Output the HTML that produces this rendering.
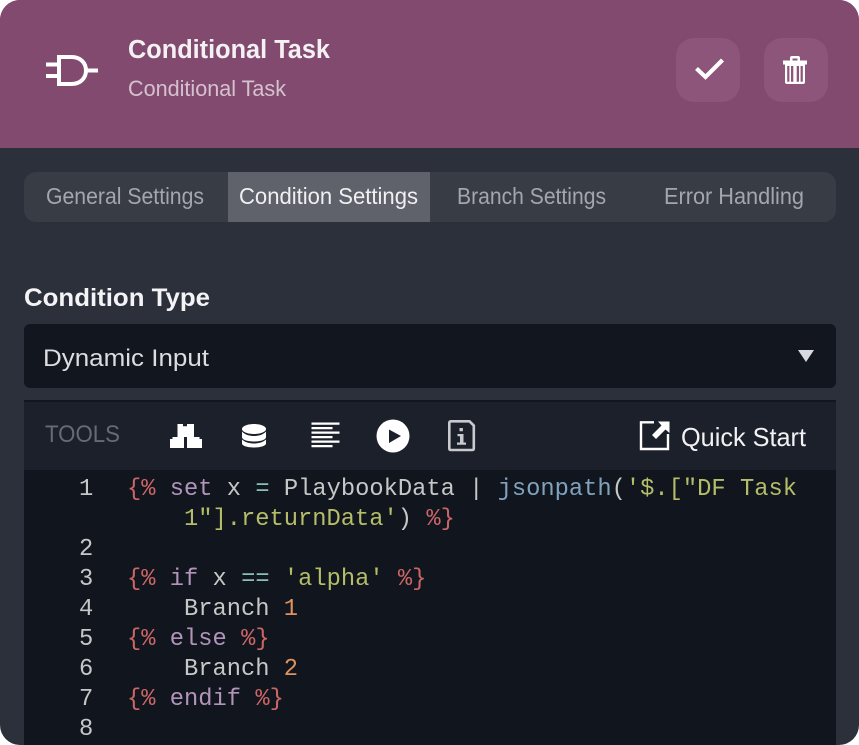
<!DOCTYPE html>
<html lang="en"><head><meta charset="utf-8"><title>Conditional Task</title>
<style>
html,body{margin:0;padding:0;background:#fff}
#p{position:relative;width:859px;height:745px;overflow:hidden;background:#2c303a;border-radius:20px}
#p div{position:absolute}
svg{position:absolute;left:0;top:0}
.s{font-family:"Liberation Sans",sans-serif}
.c{font-family:"Liberation Mono",monospace;font-size:23.75px;fill:#c5c8c6;white-space:pre;stroke:currentColor;stroke-width:0}
.r{fill:#cc6666}.k{fill:#b294bb}.o{fill:#8abeb7}.g{fill:#b5bd68}.n{fill:#de935f}.b{fill:#81a2be}
</style></head><body>
<div id="p">
<div style="left:0;top:0;width:859px;height:148px;background:#834a70"></div>
<div style="left:676px;top:38px;width:64px;height:64px;border-radius:18px;background:#8c5579"></div>
<div style="left:764px;top:38px;width:64px;height:64px;border-radius:18px;background:#8c5579"></div>
<div style="left:24px;top:172px;width:812px;height:50px;border-radius:12px;background:#383c45"></div>
<div style="left:228px;top:172px;width:202px;height:50px;background:#5f626b"></div>
<div style="left:24px;top:324px;width:812px;height:64px;border-radius:6px;background:#12161f"></div>
<div style="left:24px;top:400px;width:812px;height:70px;background:#1c202a;border-top:2px solid #12161f;box-sizing:border-box"></div>
<div style="left:24px;top:470px;width:812px;height:275px;background:#11151e"></div>
<svg width="859" height="745" viewBox="0 0 859 745" xmlns="http://www.w3.org/2000/svg">
<!-- header icons -->
<g fill="none" stroke="#fff" stroke-width="4">
<path d="M59 57H71.500C80.500 57 86 63 86 70.500C86 78 80.500 84 71.500 84H59Z"/>
<path d="M46 64.500H59M46 76H59M86 70.500H98"/>
</g>
<path d="M696.500 68.500L705.500 77L722.500 60" fill="none" stroke="#fff" stroke-width="4.200"/>
<g fill="#fff">
<path d="M790 60.500V58Q790 56 792 56H798Q800 56 800 58V60.500H807V64.500H783V60.500ZM792.500 60.500H797.500V58.500H792.500Z" fill-rule="evenodd"/>
<path d="M785 64H805V82Q805 84 803 84H787Q785 84 785 82ZM787.200 66V81.800H789.400V66ZM791 66V81.800H793.300V66ZM796.700 66V81.800H799V66ZM800.600 66V81.800H802.800V66Z" fill-rule="evenodd"/>
</g>
<!-- text -->
<g class="s">
<text x="128" y="58" font-size="25.500" font-weight="700" fill="#f4f1f3" textLength="202" lengthAdjust="spacingAndGlyphs">Conditional Task</text>
<text x="128" y="96" font-size="22.500" fill="#d4c2cf" textLength="158" lengthAdjust="spacingAndGlyphs">Conditional Task</text>
<text x="46" y="204" font-size="23" fill="#a3a6ae" textLength="158" lengthAdjust="spacingAndGlyphs">General Settings</text>
<text x="239" y="204" font-size="23" fill="#f0f0f2" textLength="179" lengthAdjust="spacingAndGlyphs">Condition Settings</text>
<text x="457" y="204" font-size="23" fill="#a3a6ae" textLength="149" lengthAdjust="spacingAndGlyphs">Branch Settings</text>
<text x="664" y="204" font-size="23" fill="#a3a6ae" textLength="140" lengthAdjust="spacingAndGlyphs">Error Handling</text>
<text x="24" y="306" font-size="25" font-weight="700" fill="#f4f4f6" textLength="186" lengthAdjust="spacingAndGlyphs">Condition Type</text>
<text x="43" y="366" font-size="24.500" fill="#dcdde1" textLength="166" lengthAdjust="spacingAndGlyphs">Dynamic Input</text>
<text x="45" y="442" font-size="24" fill="#666a74" textLength="75" lengthAdjust="spacingAndGlyphs">TOOLS</text>
<text x="681" y="446" font-size="26" fill="#f2f2f4" textLength="125" lengthAdjust="spacingAndGlyphs">Quick Start</text>
</g>
<path d="M798 350H814L806 362Z" fill="#d9dae0"/>
<!-- tool icons -->
<g fill="#fff">
<path d="M177.500 437V424H183V426.200H187V424H194V437Z"/>
<path d="M170 448V439H172.500V437H184V448Z"/>
<path d="M187 448V437H199.500V439H202V448Z"/>
<path d="M242 429C242 426 248 424 254 424C260 424 266 426 266 429C266 432 260 434 254 434C248 434 242 432 242 429Z"/>
<path d="M242 431.500C245 435 250 436 254 436C258 436 263 435 266 431.500V437C266 440 260 441.500 254 441.500C248 441.500 242 440 242 437Z"/>
<path d="M242 439.500C245 442.500 250 443.500 254 443.500C258 443.500 263 442.500 266 439.500V443.500C266 446 260 447.500 254 447.500C248 447.500 242 446 242 443.500Z"/>
<path d="M311.500 422.500H339.500V424.800H311.500ZM311.500 427H332.500V429.300H311.500ZM311.500 431.500H339.500V433.800H311.500ZM311.500 436H332.500V438.300H311.500ZM311.500 440.500H339.500V442.800H311.500ZM311.500 445H332.500V447.300H311.500Z"/>
<path d="M393 419.500A16.500 16.500 0 1 0 393 452.500A16.500 16.500 0 1 0 393 419.500ZM389 429.500L401 436L389 443Z" fill-rule="evenodd"/>
</g>
<path d="M449.300 423Q449.300 421.300 451 421.300H469.500L473.800 425.600V448.500Q473.800 450 472 450H451Q449.300 450 449.300 448.500Z" fill="none" stroke="#c8cacd" stroke-width="2.600"/>
<path d="M459.500 428h3.400v3.200h-3.400zM457.500 434h6v8.500h2.500v2.300h-9v-2.300h3v-6.200h-2.500z" fill="#c8cacd"/>
<path d="M654 422.300H641V449H668V434" fill="none" stroke="#fff" stroke-width="2.400"/>
<path d="M669.500 421.500V433L665.500 429.500L656 439L652 435L661.500 425.500L658 421.500Z" fill="#fff"/>
<!-- code -->
<g class="c" xml:space="preserve">
<text x="79" y="495">1</text>
<text x="79" y="555">2</text>
<text x="79" y="585">3</text>
<text x="79" y="615">4</text>
<text x="79" y="645">5</text>
<text x="79" y="675">6</text>
<text x="79" y="705">7</text>
<text x="79" y="735">8</text>
<text x="127" y="495" xml:space="preserve"><tspan class="r">{%</tspan> <tspan class="k">set</tspan> x <tspan class="o">=</tspan> PlaybookData | <tspan class="b">jsonpath</tspan>(<tspan class="g">'$.["DF Task</tspan></text>
<text x="184" y="525" xml:space="preserve"><tspan class="g">1"].returnData'</tspan>) <tspan class="r">%}</tspan></text>
<text x="127" y="585" xml:space="preserve"><tspan class="r">{%</tspan> <tspan class="k">if</tspan> x <tspan class="o">==</tspan> <tspan class="g">'alpha'</tspan> <tspan class="r">%}</tspan></text>
<text x="184" y="615" xml:space="preserve">Branch <tspan class="n">1</tspan></text>
<text x="127" y="645" xml:space="preserve"><tspan class="r">{%</tspan> <tspan class="k">else</tspan> <tspan class="r">%}</tspan></text>
<text x="184" y="675" xml:space="preserve">Branch <tspan class="n">2</tspan></text>
<text x="127" y="705" xml:space="preserve"><tspan class="r">{%</tspan> <tspan class="k">endif</tspan> <tspan class="r">%}</tspan></text>
</g>
</svg>
</div>
</body></html>
